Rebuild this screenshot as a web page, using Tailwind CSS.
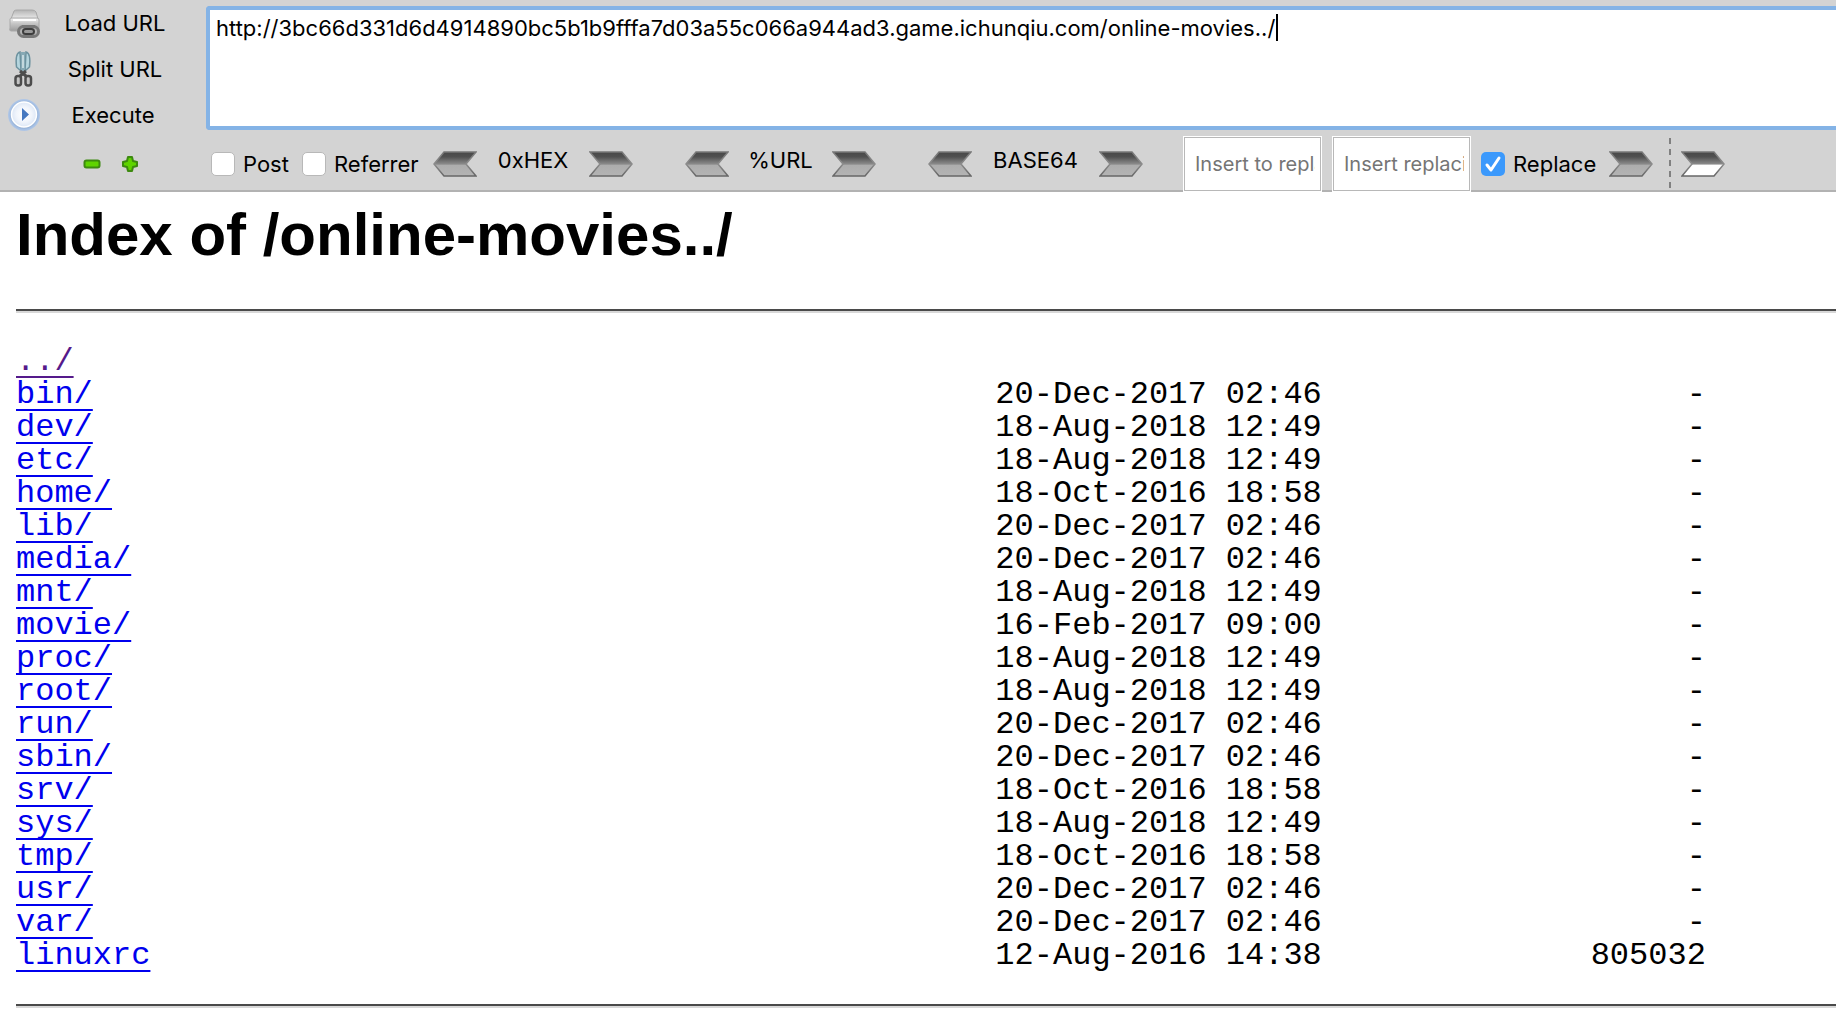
<!DOCTYPE html>
<html lang="en">
<head>
<meta charset="utf-8">
<title>Index of /online-movies../</title>
<script src="https://cdn.jsdelivr.net/npm/@tailwindcss/browser@4"></script>
</head>
<body class="bg-white text-black overflow-x-hidden">
<svg class="absolute size-0" aria-hidden="true">
  <defs>
    <linearGradient id="steel" x1="0" y1="0" x2="0" y2="1">
      <stop offset="0" stop-color="#484848"/><stop offset=".2" stop-color="#505050"/><stop offset=".5" stop-color="#8a8a8a"/><stop offset=".56" stop-color="#adadad"/><stop offset="1" stop-color="#b4b4b4"/>
    </linearGradient>
    <linearGradient id="steelOpen" x1="0" y1="0" x2="0" y2="1">
      <stop offset="0" stop-color="#484848"/><stop offset=".2" stop-color="#505050"/><stop offset=".5" stop-color="#8a8a8a"/><stop offset=".55" stop-color="#fff"/><stop offset="1" stop-color="#fff"/>
    </linearGradient>
    <linearGradient id="edge" x1="0" y1="0" x2="0" y2="1">
      <stop offset="0" stop-color="#777"/><stop offset=".5" stop-color="#8c8c8c"/><stop offset="1" stop-color="#666"/>
    </linearGradient>
    <radialGradient id="orb"><stop offset="0" stop-color="#fff"/><stop offset=".6" stop-color="#f1f5fc"/><stop offset="1" stop-color="#dde7f6"/></radialGradient>
    <radialGradient id="glow"><stop offset=".75" stop-color="#8fa9cc"/><stop offset=".9" stop-color="#a4bfe4"/><stop offset="1" stop-color="#b3c8e6"/></radialGradient>
    <linearGradient id="lid" x1="0" y1="0" x2="0" y2="1"><stop offset="0" stop-color="#b4b4b4"/><stop offset="1" stop-color="#ececec"/></linearGradient>
    <linearGradient id="body" x1="0" y1="0" x2="0" y2="1"><stop offset="0" stop-color="#f2f2f2"/><stop offset=".4" stop-color="#c8c8c8"/><stop offset="1" stop-color="#9c9c9c"/></linearGradient>
    <symbol id="next" viewBox="0 0 44 26"><path d="M1 1H33L43 13 33 25H1L11 13Z" fill="url(#steel)" stroke="url(#edge)" stroke-width="1.5"/></symbol>
    <symbol id="prev" viewBox="0 0 44 26"><path d="M43 1H11L1 13 11 25H43L33 13Z" fill="url(#steel)" stroke="url(#edge)" stroke-width="1.5"/></symbol>
    <symbol id="nextOpen" viewBox="0 0 44 26"><path d="M1 1H33L43 13 33 25H1L11 13Z" fill="url(#steelOpen)" stroke="url(#edge)" stroke-width="1.5"/></symbol>
  </defs>
</svg>

<header class="bg-[#d3d3d3] border-b-2 border-[#b2b2b2] font-['Inter',sans-serif] text-[22px] leading-[26px]">
  <div class="flex">
    <div class="w-[206px] shrink-0 flex flex-col pl-2">
      <button class="flex items-center h-[46px]">
        <svg class="size-8" viewBox="0 0 32 32">
          <path d="M6 4Q7 3 9 3H24Q27 3 28 5L30 12H3Z" fill="url(#lid)" stroke="#a8a8a8"/>
          <path d="M2 12Q2 11 4 11H29Q31 11 31 13V24H3Q1 24 2 21Z" fill="url(#body)" stroke="#aaa"/>
          <path d="M5 13H28" stroke="#fff" stroke-width="2"/>
          <rect x="10.500" y="19.500" width="20" height="10" rx="5" fill="#b2b2b2" stroke="#777" stroke-width="3"/>
          <rect x="15" y="22" width="11" height="5" rx="2.500" fill="#999" stroke="#3d3d3d" stroke-width="2"/>
          <path d="M14 19H27" stroke="#777" stroke-width="2"/>
        </svg>
        <span class="w-[150px] text-center">Load URL</span>
      </button>
      <button class="flex items-center h-[46px]">
        <svg class="w-8 h-9" viewBox="0 0 32 36">
          <path d="M12 1Q7 2 8.500 16L13 20ZM18 1Q23 2 21.500 16L17 20Z" fill="#b5d5de" stroke="#6d929f" stroke-width="1.500"/>
          <path d="M13 1H17V18L15 21 13 18Z" fill="#86a9b5"/><path d="M15 4V17" stroke="#d8e8ec" stroke-width="1.500"/>
          <path d="M12 20L18 25M18 20L12 25" stroke="#4c4c4c" stroke-width="3"/>
          <rect x="7.500" y="25" width="5.500" height="9.500" rx="2.500" fill="#c4c4c4" stroke="#4c4c4c" stroke-width="2.500"/>
          <rect x="17.500" y="25" width="5.500" height="9.500" rx="2.500" fill="#c4c4c4" stroke="#4c4c4c" stroke-width="2.500"/>
        </svg>
        <span class="w-[150px] text-center">Split URL</span>
      </button>
      <button class="flex items-center h-[46px]">
        <svg class="size-8" viewBox="0 0 32 32"><circle cx="16" cy="16" r="16" fill="url(#glow)"/><circle cx="16" cy="15.500" r="12.500" fill="url(#orb)" stroke="#fff" stroke-width="1.500"/><path d="M14 9L21 15.500 14 22Z" fill="#4678c0"/></svg>
        <span class="w-[146px] text-center">Execute</span>
      </button>
    </div>
    <div class="relative grow min-w-0 pt-[6px]">
      <textarea aria-label="URL" spellcheck="false" class="block w-full h-[124px] resize-none overflow-hidden bg-white border-4 border-r-0 border-[#84b3e6] rounded-l-[4px] px-[6px] py-[5px] outline-none">http://3bc66d331d6d4914890bc5b1b9fffa7d03a55c066a944ad3.game.ichunqiu.com/online-movies../</textarea>
      <span class="absolute left-[1070px] top-[14px] w-[2px] h-[27px] bg-black"></span>
    </div>
  </div>
  <div class="flex items-center h-[52px]">
    <div class="w-[211px] shrink-0 flex items-center gap-[20px] pl-[83px]">
      <button aria-label="Smaller"><svg class="w-[18px] h-[18px]" viewBox="0 0 18 18"><rect x="1.500" y="5.500" width="15" height="7" rx="2" fill="#5fd400" stroke="#3d8a10" stroke-width="2"/></svg></button>
      <button aria-label="Larger"><svg class="w-[18px] h-[18px]" viewBox="0 0 18 18"><path d="M7 2H11L12 6 16 7V11L12 12 11 16H7L6 12 2 11V7L6 6Z" fill="#5fd400" stroke="#3d8a10" stroke-width="2" stroke-linejoin="round"/></svg></button>
    </div>
    <label class="flex items-center gap-2 w-[91px]"><input type="checkbox" class="appearance-none size-6 bg-white border border-[#b8b8b8] rounded-[5px]"><span>Post</span></label>
    <label class="flex items-center gap-2 w-[131px]"><input type="checkbox" class="appearance-none size-6 bg-white border border-[#b8b8b8] rounded-[5px]"><span>Referrer</span></label>
    <div class="flex items-center w-[252px]">
      <button aria-label="Decode hex"><svg class="w-11 h-[26px]"><use href="#prev"/></svg></button>
      <span class="w-28 text-center pb-[8px]">0xHEX</span>
      <button aria-label="Encode hex"><svg class="w-11 h-[26px]"><use href="#next"/></svg></button>
    </div>
    <div class="flex items-center w-[243px]">
      <button aria-label="Decode URL"><svg class="w-11 h-[26px]"><use href="#prev"/></svg></button>
      <span class="w-[103px] text-center pb-[8px]">%URL</span>
      <button aria-label="Encode URL"><svg class="w-11 h-[26px]"><use href="#next"/></svg></button>
    </div>
    <div class="flex items-center w-[255px]">
      <button aria-label="Decode base64"><svg class="w-11 h-[26px]"><use href="#prev"/></svg></button>
      <span class="w-[127px] text-center pb-[8px]">BASE64</span>
      <button aria-label="Encode base64"><svg class="w-11 h-[26px]"><use href="#next"/></svg></button>
    </div>
    <div class="flex items-center gap-[10px]">
      <input type="text" aria-label="Text to replace" placeholder="Insert to replace" class="w-[139px] h-14 bg-white border border-white inset-ring inset-ring-[#b8b8b8] pl-[11px] pr-[6px] text-[20px] placeholder:text-[#757575]">
      <input type="text" aria-label="Replacement text" placeholder="Insert replacing" class="w-[139px] h-14 bg-white border border-white inset-ring inset-ring-[#b8b8b8] pl-[11px] pr-[6px] text-[20px] placeholder:text-[#757575]">
      <label class="flex items-center gap-2 w-[118px]">
        <span class="grid">
          <input type="checkbox" checked class="col-start-1 row-start-1 appearance-none size-6 bg-[#3b99fc] rounded-[5px]">
          <svg class="col-start-1 row-start-1 size-6 pointer-events-none" viewBox="0 0 24 24"><path d="M6 13L10 18 18 6" fill="none" stroke="#fff" stroke-width="3" stroke-linecap="round" stroke-linejoin="round"/></svg>
        </span>
        <span>Replace</span>
      </label>
      <button aria-label="Replace"><svg class="w-11 h-[26px]"><use href="#next"/></svg></button>
    </div>
    <svg class="w-[2px] h-[52px] ml-[16px] mr-[10px]" viewBox="0 0 2 52"><path d="M1 0V52" stroke="#808080" stroke-width="2" stroke-dasharray="6 5"/></svg>
    <button aria-label="Run all"><svg class="w-11 h-[26px]"><use href="#nextOpen"/></svg></button>
  </div>
</header>

<main class="pl-4 pb-4">
  <h1 class="font-['Liberation_Sans',sans-serif] font-bold text-[60px] leading-[74px] pt-[6px]">Index of /online-movies../</h1>
  <hr class="mt-[37px] h-1 border-t-2 border-b-2 border-t-[#4a4a4a] border-b-[#d8d8d8]">
  <table class="my-8 table-fixed w-[88ch] font-['Liberation_Mono',monospace] text-[32px] leading-[33px] text-left whitespace-nowrap">
    <colgroup><col class="w-[51ch]"><col class="w-[17ch]"><col class="w-[20ch]"></colgroup>
    <tbody id="listing"></tbody>
  </table>
  <hr class="h-1 border-t-2 border-b-2 border-t-[#4a4a4a] border-b-[#d8d8d8]">
</main>
<script>
  const entries = [
    ['../', '', ''],
    ['bin/', '20-Dec-2017 02:46', '-'],
    ['dev/', '18-Aug-2018 12:49', '-'],
    ['etc/', '18-Aug-2018 12:49', '-'],
    ['home/', '18-Oct-2016 18:58', '-'],
    ['lib/', '20-Dec-2017 02:46', '-'],
    ['media/', '20-Dec-2017 02:46', '-'],
    ['mnt/', '18-Aug-2018 12:49', '-'],
    ['movie/', '16-Feb-2017 09:00', '-'],
    ['proc/', '18-Aug-2018 12:49', '-'],
    ['root/', '18-Aug-2018 12:49', '-'],
    ['run/', '20-Dec-2017 02:46', '-'],
    ['sbin/', '20-Dec-2017 02:46', '-'],
    ['srv/', '18-Oct-2016 18:58', '-'],
    ['sys/', '18-Aug-2018 12:49', '-'],
    ['tmp/', '18-Oct-2016 18:58', '-'],
    ['usr/', '20-Dec-2017 02:46', '-'],
    ['var/', '20-Dec-2017 02:46', '-'],
    ['linuxrc', '12-Aug-2016 14:38', '805032'],
  ];
  const link = 'underline decoration-2 underline-offset-[6px] [text-decoration-skip-ink:none] ';
  document.getElementById('listing').innerHTML = entries.map(([name, date, size], i) =>
    `<tr><td><a href="${name}" class="${link}${i ? 'text-[#0000ee]' : 'text-[#551a8b]'}">${name}</a></td><td>${date}</td><td class="text-right">${size}</td></tr>`
  ).join('');
</script>
</body>
</html>
